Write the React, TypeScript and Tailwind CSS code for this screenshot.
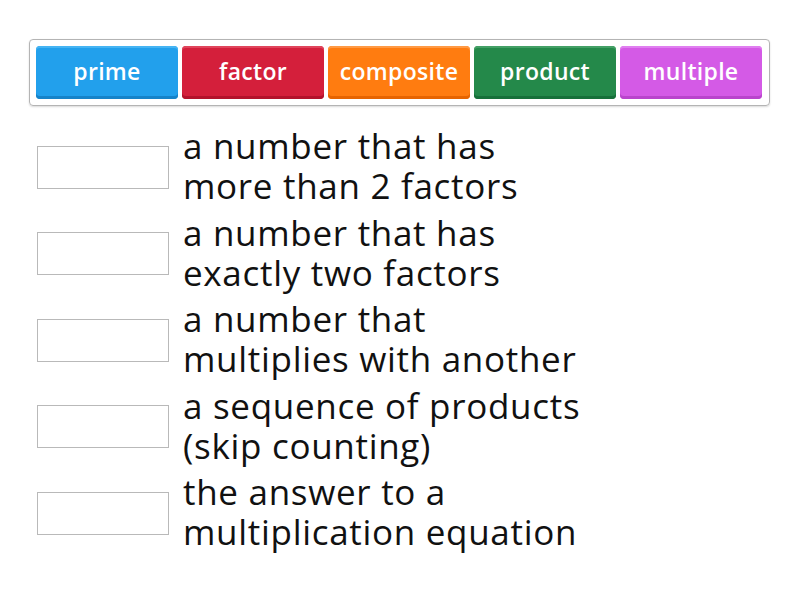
import React from "react";

const tiles = [
  { label: "prime", bg: "bg-[#22a0ec]", sh: "shadow-[inset_0_-3px_0_#1683c9,inset_0_2px_0_#45b4f3]" },
  { label: "factor", bg: "bg-[#d41f3b]", sh: "shadow-[inset_0_-3px_0_#b3122b,inset_0_2px_0_#e0455c]" },
  { label: "composite", bg: "bg-[#ff7c10]", sh: "shadow-[inset_0_-3px_0_#e66400,inset_0_2px_0_#ff9a45]" },
  { label: "product", bg: "bg-[#24894a]", sh: "shadow-[inset_0_-3px_0_#17703a,inset_0_2px_0_#44a066]" },
  { label: "multiple", bg: "bg-[#d45ae6]", sh: "shadow-[inset_0_-3px_0_#b944cc,inset_0_2px_0_#e07ff0]" },
];

const rows = [
  ["a number that has", "more than 2 factors"],
  ["a number that has", "exactly two factors"],
  ["a number that", "multiplies with another"],
  ["a sequence of products", "(skip counting)"],
  ["the answer to a", "multiplication equation"],
];

export default function App() {
  return (
    <div
      className="w-[800px] h-[600px] bg-white relative"
      style={{ fontFamily: "'Open Sans', 'Noto Sans', sans-serif" }}
    >
      <div className="pt-[39px] pl-[29px]">
        <div className="w-[741px] h-[67px] border border-[#b4b4b4] rounded-[4px] shadow-[0_1px_2px_rgba(0,0,0,0.15)] flex items-center gap-[4px] px-[6px]">
          {tiles.map((t) => (
            <div
              key={t.label}
              className={`w-[142px] h-[53px] rounded-[4px] flex items-center justify-center text-white text-[23px] font-semibold tracking-[0.3px] pb-[2px] ${t.bg} ${t.sh}`}
            >
              {t.label}
            </div>
          ))}
        </div>
      </div>
      <div className="flex flex-col pt-[18px] pl-[37px]">
        {rows.map((r, i) => (
          <div key={i} className="h-[86.5px] flex items-center">
            <div className="w-[132px] h-[43px] border border-[#b9b9b9] shrink-0" />
            <div className="ml-[14px] text-[35px] leading-[40px] text-[#111] tracking-[0.7px] pb-[2px] [font-variant-ligatures:none]">
              <div>{r[0]}</div>
              <div>{r[1]}</div>
            </div>
          </div>
        ))}
      </div>
    </div>
  );
}
